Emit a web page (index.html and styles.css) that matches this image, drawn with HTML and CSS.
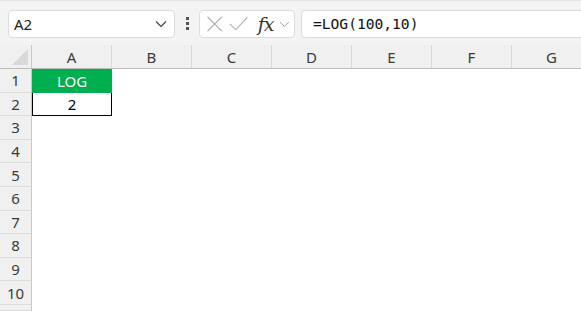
FILE: index.html
```html
<!DOCTYPE html>
<html lang="en">

<head>
    <meta charset="UTF-8">
    <title>LOG</title>
    <link rel="stylesheet" href="styles.css">
</head>

<body>
    <div class="toolbar">
        <div class="namebox">
            <span>A2</span>
            <svg class="chev" width="12" height="8" viewBox="0 0 12 8"><path d="M1 1.5 L6 6.5 L11 1.5" fill="none" stroke="#444" stroke-width="1.2"/></svg>
        </div>
        <div class="dots"><i></i><i></i><i></i></div>
        <div class="fxbox">
            <svg width="18" height="18" viewBox="0 0 18 18"><path d="M1.5 1.5 L16.5 16.5 M16.5 1.5 L1.5 16.5" stroke="#b4b4b4" stroke-width="1.2"/></svg>
            <svg width="20" height="18" viewBox="0 0 20 18"><path d="M1 9 L7 15 L19 2" fill="none" stroke="#b4b4b4" stroke-width="1.2"/></svg>
            <span class="fx">fx</span>
            <svg width="11" height="8" viewBox="0 0 11 8"><path d="M1 2 L5.5 6.5 L10 2" fill="none" stroke="#999" stroke-width="1"/></svg>
        </div>
        <div class="formula">=LOG(100,10)</div>
    </div>

    <div class="sheet">
        <div class="corner"><span class="tri"></span></div>
        <div class="colhead">A</div>
        <div class="colhead">B</div>
        <div class="colhead">C</div>
        <div class="colhead">D</div>
        <div class="colhead">E</div>
        <div class="colhead">F</div>
        <div class="colhead">G</div>

        <div class="rowhead">1</div>
        <div class="cell title">LOG</div>
        <div class="cell"></div><div class="cell"></div><div class="cell"></div><div class="cell"></div><div class="cell"></div><div class="cell"></div>

        <div class="rowhead">2</div>
        <div class="cell value">2</div>
        <div class="cell"></div><div class="cell"></div><div class="cell"></div><div class="cell"></div><div class="cell"></div><div class="cell"></div>

        <div class="rowhead">3</div><div class="cell empty"></div>
        <div class="rowhead">4</div><div class="cell empty"></div>
        <div class="rowhead">5</div><div class="cell empty"></div>
        <div class="rowhead">6</div><div class="cell empty"></div>
        <div class="rowhead">7</div><div class="cell empty"></div>
        <div class="rowhead">8</div><div class="cell empty"></div>
        <div class="rowhead">9</div><div class="cell empty"></div>
        <div class="rowhead">10</div><div class="cell empty"></div>
        <div class="rowhead"></div><div class="cell empty"></div>
    </div>
</body>

</html>
```

FILE: styles.css
```css
* {
    box-sizing: border-box;
}

body {
    margin: 0;
    width: 581px;
    height: 311px;
    overflow: hidden;
    background: #f3f3f3;
    font-family: "Noto Sans", "Open Sans", sans-serif;
}

.toolbar {
    height: 45px;
    display: flex;
    align-items: center;
    padding: 1px 0 0 8px;
    border-top: 1px solid #e6e6e6;
}

.namebox,
.fxbox,
.formula {
    height: 28px;
    background: white;
    border: 1px solid #dcdcdc;
    border-radius: 4px;
    display: flex;
    align-items: center;
}

.namebox {
    width: 167px;
    padding: 0 7px 0 5px;
    justify-content: space-between;
    font-size: 15px;
    color: #222;
}

.dots {
    width: 24px;
    display: flex;
    flex-direction: column;
    align-items: center;
    gap: 2px;
}

.dots i {
    width: 3px;
    height: 3px;
    background: #555;
}

.fxbox {
    width: 96px;
    padding: 0 4px 0 6px;
    gap: 6px;
}

.fx {
    font-family: "DejaVu Serif", "Liberation Serif", serif;
    font-style: italic;
    font-size: 19px;
    color: #333;
    margin-left: 3px;
    letter-spacing: -1px;
}

.formula {
    flex: 1;
    margin-left: 6px;
    border-right: none;
    border-radius: 4px 0 0 4px;
    padding-left: 11px;
    font-family: "DejaVu Sans Mono", "Liberation Mono", monospace;
    font-size: 14.6px;
    color: #111;
}

.sheet {
    display: grid;
    grid-template-columns: 32px repeat(7, 80px);
    grid-template-rows: 24px repeat(10, 23.6px) 6px;
    overflow: hidden;
}

.corner,
.colhead {
    background: #f0f0f0;
    border-bottom: 1px solid #bcbcbc;
    border-right: 1px solid #dadada;
    display: flex;
    align-items: center;
    justify-content: center;
    font-size: 15px;
    color: #3a3a3a;
}

.corner {
    border-right: 1px solid #c8c8c8;
    justify-content: flex-end;
    align-items: flex-end;
    padding: 0 3px 3px 0;
}

.tri {
    width: 16px;
    height: 16px;
    background: #d9d9d9;
    clip-path: polygon(100% 0, 100% 100%, 0 100%);
}

.rowhead {
    background: #f0f0f0;
    border-right: 1px solid #c8c8c8;
    border-bottom: 1px solid #dcdcdc;
    display: flex;
    align-items: center;
    justify-content: center;
    font-size: 15px;
    color: #3a3a3a;
}

.cell {
    background: white;
    display: flex;
    align-items: center;
    justify-content: center;
    font-size: 15px;
}

.cell.empty {
    grid-column: 2 / span 7;
}

.title {
    background: #00b050;
    color: white;
}

.value {
    border: 1px solid #000;
    border-top: none;
    color: #000;
}
```
